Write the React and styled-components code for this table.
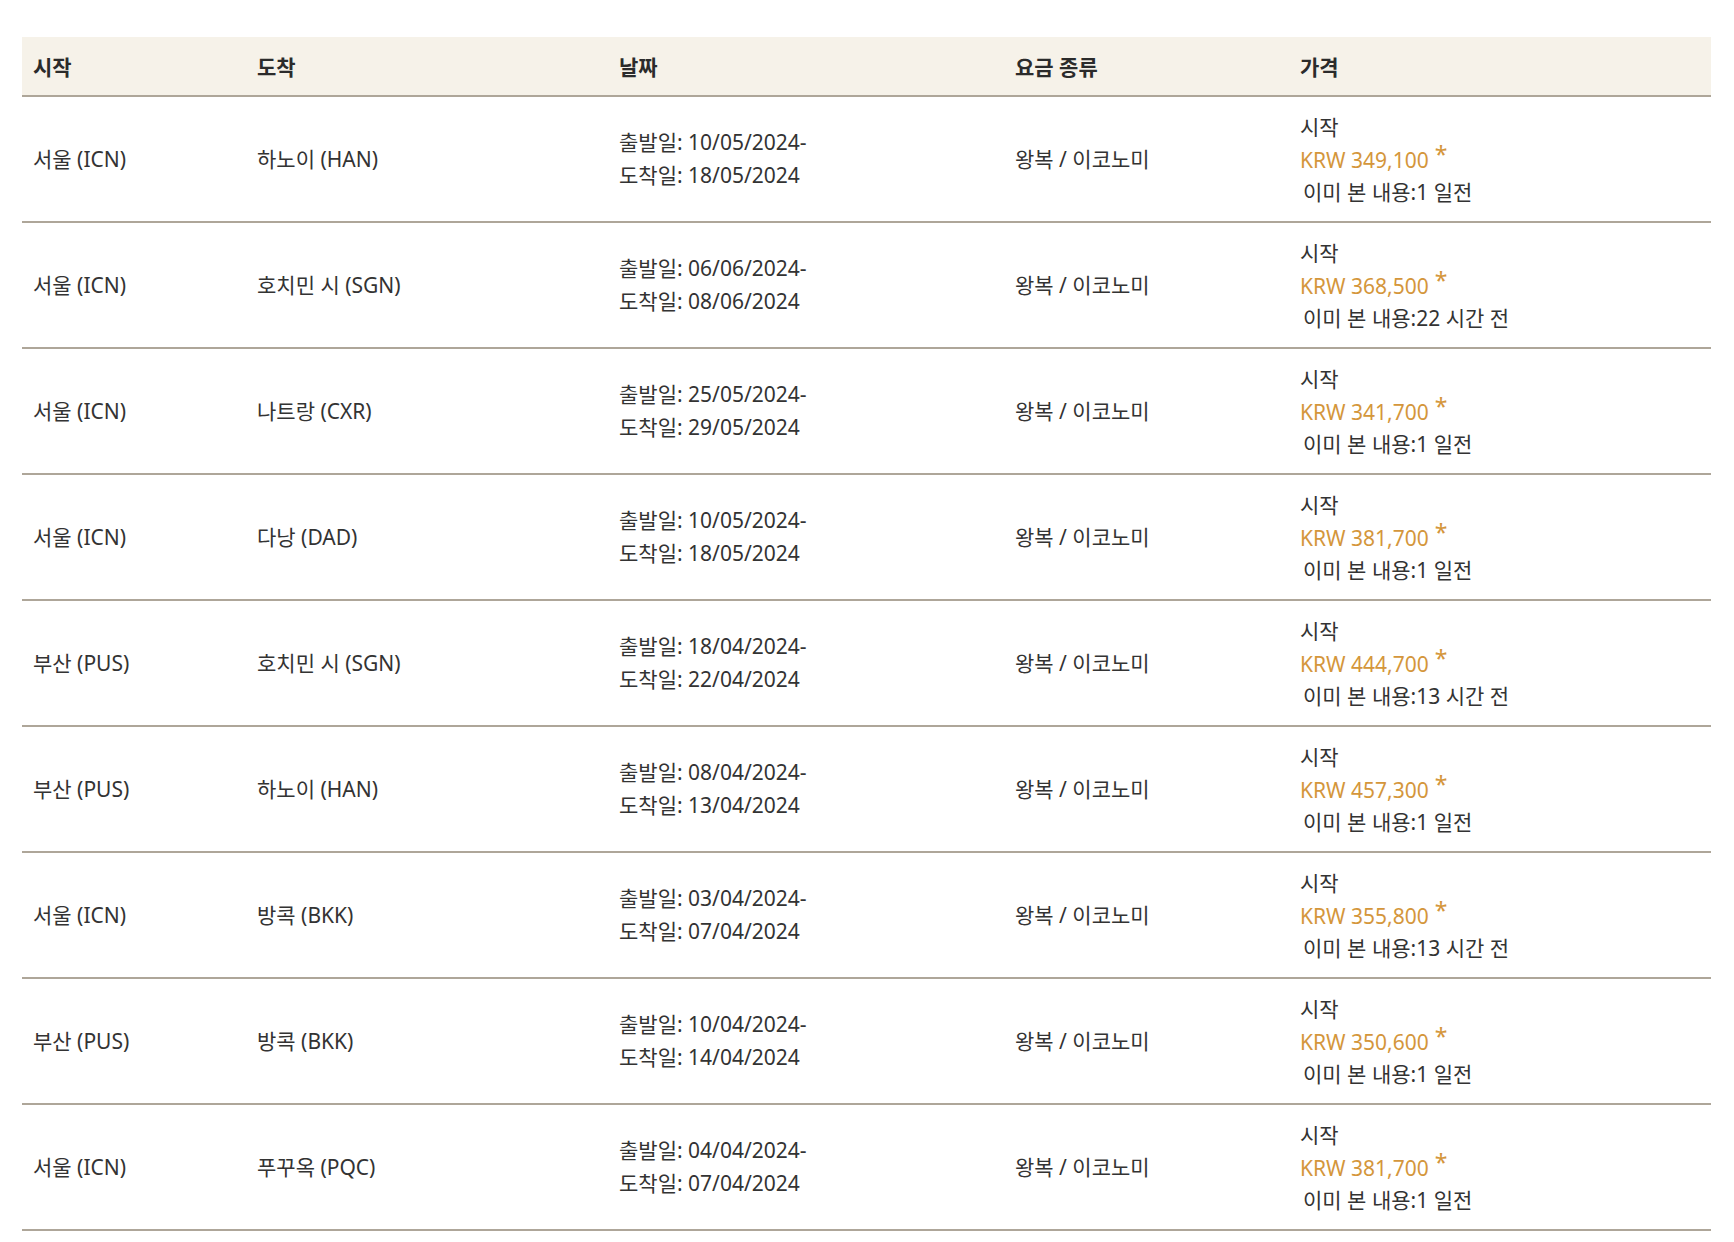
import React from 'react';
import styled, { createGlobalStyle } from 'styled-components';

const GlobalStyle = createGlobalStyle`
  body {
    margin: 0;
    background: #fff;
    font-family: "Noto Sans", "Noto Sans CJK KR", sans-serif;
    color: #333;
  }
`;

const Page = styled.div`
  padding: 37px 23px 0 22px;
`;

const Grid = styled.div`
  display: grid;
  grid-template-columns: 224px 362px 396px 285px 1fr;
`;

const HeadRow = styled(Grid)`
  background: #f6f2e9;
  height: 58px;
  border-bottom: 2px solid #aea699;
  align-items: center;
`;

const HeadCell = styled.div`
  padding-left: 11px;
  font-size: 21px;
  font-weight: 700;
  color: #2b2b2b;
`;

const Row = styled(Grid)`
  height: 124px;
  border-bottom: 2px solid #aea699;
  align-items: center;
`;

const Cell = styled.div`
  padding-left: 11px;
  font-size: 21px;
  line-height: ${p => p.$lh || '28px'};
  color: #333;
`;

const Line = styled.div``;

const Price = styled.div`
  color: #d4963b;
  white-space: nowrap;
`;

const Star = styled.span`
  display: inline-block;
  margin-left: 6px;
  font-size: 23px;
  line-height: 1;
  vertical-align: 5px;
`;

const Seen = styled.div`
  padding-left: 3px;
`;

const rows = [
  ['서울 (ICN)', '하노이 (HAN)', '10/05/2024', '18/05/2024', '349,100', '1 일전'],
  ['서울 (ICN)', '호치민 시 (SGN)', '06/06/2024', '08/06/2024', '368,500', '22 시간 전'],
  ['서울 (ICN)', '나트랑 (CXR)', '25/05/2024', '29/05/2024', '341,700', '1 일전'],
  ['서울 (ICN)', '다낭 (DAD)', '10/05/2024', '18/05/2024', '381,700', '1 일전'],
  ['부산 (PUS)', '호치민 시 (SGN)', '18/04/2024', '22/04/2024', '444,700', '13 시간 전'],
  ['부산 (PUS)', '하노이 (HAN)', '08/04/2024', '13/04/2024', '457,300', '1 일전'],
  ['서울 (ICN)', '방콕 (BKK)', '03/04/2024', '07/04/2024', '355,800', '13 시간 전'],
  ['부산 (PUS)', '방콕 (BKK)', '10/04/2024', '14/04/2024', '350,600', '1 일전'],
  ['서울 (ICN)', '푸꾸옥 (PQC)', '04/04/2024', '07/04/2024', '381,700', '1 일전'],
];

export default function App() {
  return (
    <Page>
      <GlobalStyle />
      <HeadRow>
        <HeadCell>시작</HeadCell>
        <HeadCell>도착</HeadCell>
        <HeadCell>날짜</HeadCell>
        <HeadCell>요금 종류</HeadCell>
        <HeadCell>가격</HeadCell>
      </HeadRow>
      {rows.map(([from, to, dep, arr, price, seen], i) => (
        <Row key={i}>
          <Cell>{from}</Cell>
          <Cell>{to}</Cell>
          <Cell $lh="33px">
            <Line>출발일: {dep}-</Line>
            <Line>도착일: {arr}</Line>
          </Cell>
          <Cell>왕복 / 이코노미</Cell>
          <Cell $lh="32px">
            <Line>시작</Line>
            <Price>KRW {price}<Star>*</Star></Price>
            <Seen>이미 본 내용:{seen}</Seen>
          </Cell>
        </Row>
      ))}
    </Page>
  );
}
